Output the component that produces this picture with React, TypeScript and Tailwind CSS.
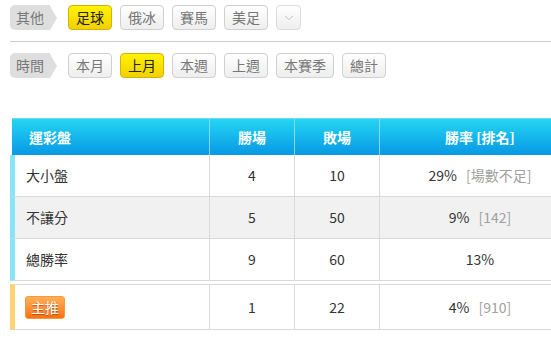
import { ChevronDown } from 'lucide-react';

const sports = ['足球', '俄冰', '賽馬', '美足'];
const periods = ['本月', '上月', '本週', '上週', '本賽季', '總計'];

type Row = { name: string; win: number; lose: number; rate: string; rank?: string; bg: string };

const rows: Row[] = [
    { name: '大小盤', win: 4, lose: 10, rate: '29%', rank: '[場數不足]', bg: 'bg-white' },
    { name: '不讓分', win: 5, lose: 50, rate: '9%', rank: '[142]', bg: 'bg-[#f1f1f1]' },
    { name: '總勝率', win: 9, lose: 60, rate: '13%', bg: 'bg-white' },
];

function Label({ text }: { text: string }) {
    return (
        <div className="flex items-center h-[25px] mr-[3px]">
            <div className="h-full pl-[6px] pr-[6px] flex items-center bg-[#dedede] text-[#777] rounded-l-[5px] text-[14px]">{text}</div>
            <div className="w-0 h-0 border-y-[12.5px] border-y-transparent border-l-[7px] border-l-[#dedede]" />
        </div>
    );
}

function Btn({ text, active }: { text: string; active?: boolean }) {
    return (
        <div
            className={
                active
                    ? 'h-[25px] px-[7px] flex items-center rounded-[4px] border border-[#d4b400] bg-gradient-to-b from-[#fff200] to-[#f2d000] text-[#222] text-[14px]'
                    : 'h-[25px] px-[7px] flex items-center rounded-[4px] border border-[#d0d0d0] bg-gradient-to-b from-white to-[#eeeeee] text-[#777] text-[14px]'
            }
        >
            {text}
        </div>
    );
}

export default function App() {
    return (
        <div className="w-[551px] h-[351px] overflow-hidden bg-white font-['Noto_Sans_CJK_TC',sans-serif]">
            {/* Filters */}
            <div className="pl-[10px] pt-[5px]">
                <div className="flex items-center gap-[8px]">
                    <Label text="其他" />
                    {sports.map((s, i) => (
                        <Btn key={s} text={s} active={i === 0} />
                    ))}
                    <div className="h-[25px] w-[25px] flex items-center justify-center rounded-[4px] border border-[#dcdcdc] bg-gradient-to-b from-white to-[#eeeeee] text-[#b5b5b5]">
                        <ChevronDown size={14} strokeWidth={1.5} />
                    </div>
                </div>
                <div className="h-px bg-[#cccccc] mt-[11px] mb-[11px]" />
                <div className="flex items-center gap-[8px]">
                    <Label text="時間" />
                    {periods.map((s, i) => (
                        <Btn key={s} text={s} active={i === 1} />
                    ))}
                </div>
            </div>

            {/* Table */}
            <div className="mt-[40px] w-[600px] text-[14px]">
                <div className="ml-[12px] flex h-[37px] border-t border-[#6fdcf3] bg-gradient-to-b from-[#25d6f2] to-[#0a98e5] text-white font-bold">
                    <div className="w-[198px] pl-[17px] flex items-center border-r border-[#8ad8f2]">運彩盤</div>
                    <div className="w-[85px] flex items-center justify-center border-r border-[#8ad8f2]">勝場</div>
                    <div className="w-[85px] flex items-center justify-center border-r border-[#8ad8f2]">敗場</div>
                    <div className="w-[200px] flex items-center justify-center">勝率 [排名]</div>
                </div>

                {rows.map(r => (
                    <div key={r.name} className={`ml-[10px] flex h-[42px] border-l-[5px] border-l-[#8ae4f9] border-b border-b-[#d9d9d9] text-[#333] ${r.bg}`}>
                        <div className="w-[195px] pl-[11px] flex items-center border-r border-[#d9d9d9]">{r.name}</div>
                        <div className="w-[85px] flex items-center justify-center border-r border-[#d9d9d9]">{r.win}</div>
                        <div className="w-[85px] flex items-center justify-center border-r border-[#d9d9d9]">{r.lose}</div>
                        <div className="w-[200px] flex items-center justify-center gap-[9px]">
                            <span>{r.rate}</span>
                            {r.rank && <span className="text-[#a0a0a0]">{r.rank}</span>}
                        </div>
                    </div>
                ))}

                <div className="ml-[10px] mt-[3px] flex h-[46px] border-l-[5px] border-l-[#ffd470] border-y border-y-[#d9d9d9] text-[#333] bg-white">
                    <div className="w-[195px] pl-[10px] flex items-center border-r border-[#d9d9d9]">
                        <span className="h-[23px] px-[5px] flex items-center rounded-[3px] border border-[#f39a3a] bg-gradient-to-b from-[#ffb055] to-[#ff6f12] text-white [text-shadow:0_1px_1px_rgba(120,50,0,0.6)]">主推</span>
                    </div>
                    <div className="w-[85px] flex items-center justify-center border-r border-[#d9d9d9]">1</div>
                    <div className="w-[85px] flex items-center justify-center border-r border-[#d9d9d9]">22</div>
                    <div className="w-[200px] flex items-center justify-center gap-[9px]">
                        <span>4%</span>
                        <span className="text-[#a0a0a0]">[910]</span>
                    </div>
                </div>
            </div>
        </div>
    );
}
